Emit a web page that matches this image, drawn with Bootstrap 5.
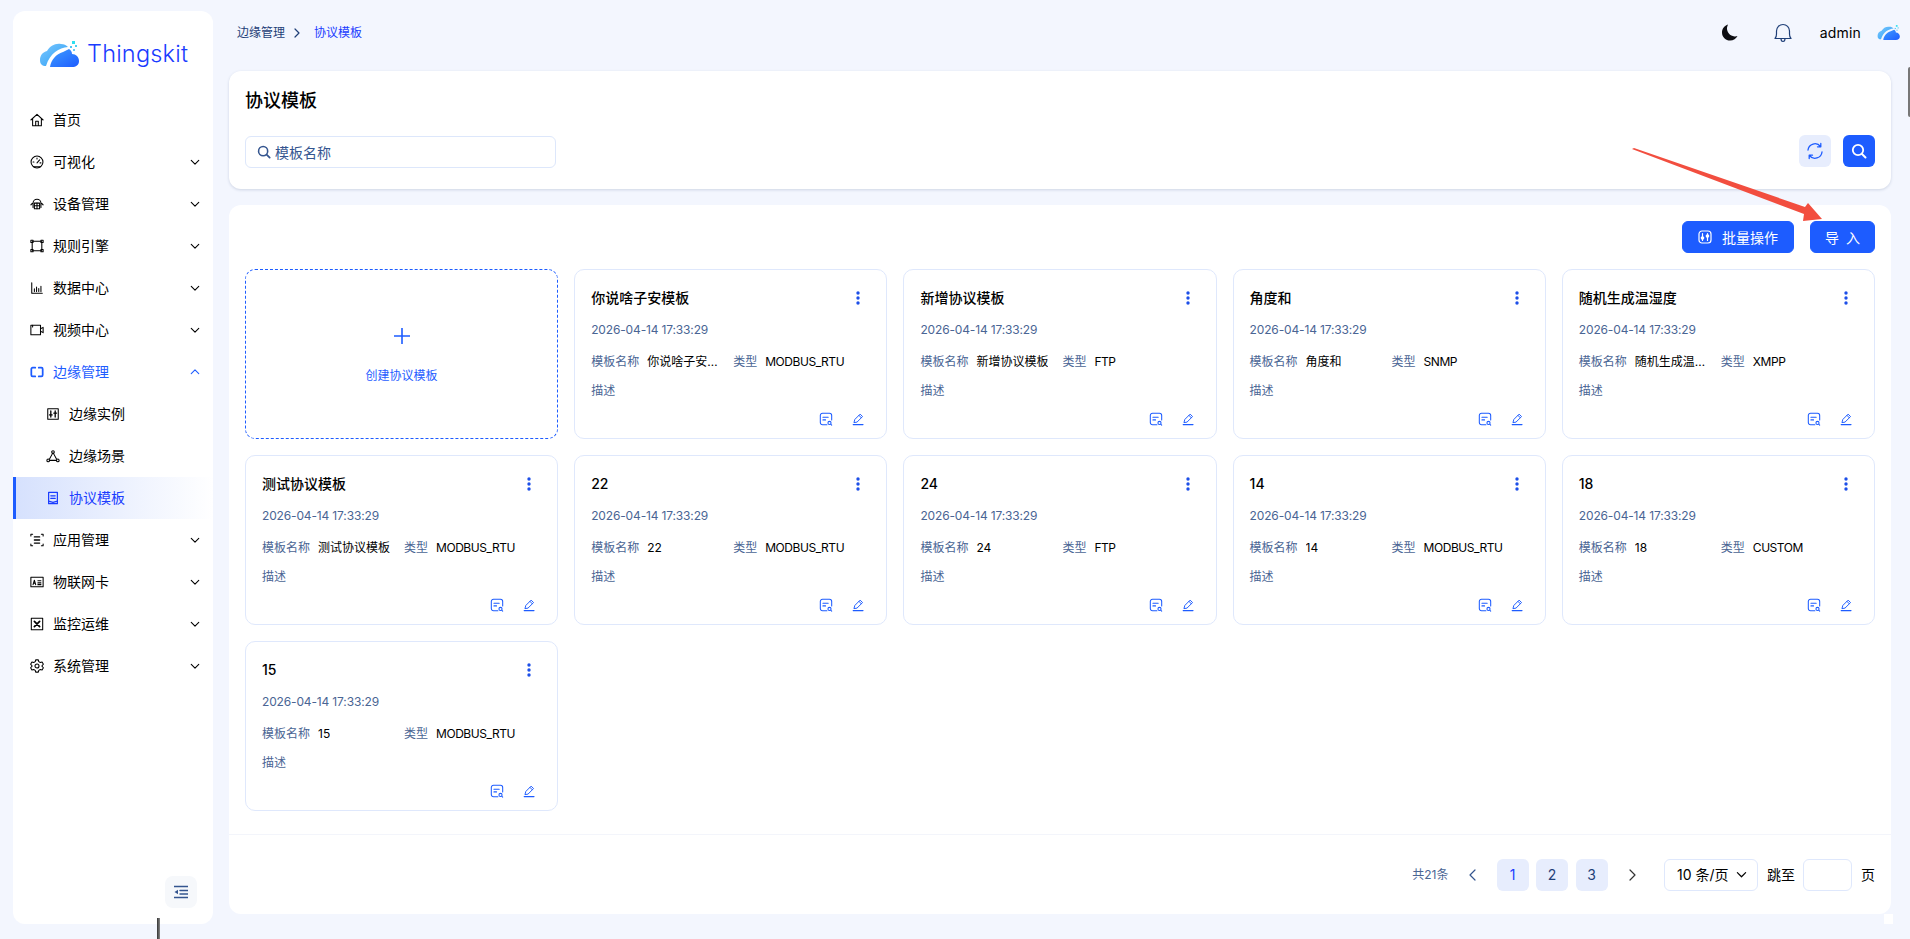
<!DOCTYPE html>
<html lang="zh-CN">
<head>
    <meta charset="UTF-8">
    <meta name="viewport" content="width=device-width, initial-scale=1.0">
    <title>协议模板</title>
    <link href="https://cdn.jsdelivr.net/npm/bootstrap@5.3.0/dist/css/bootstrap.min.css" rel="stylesheet">
    <style>
        body { width: 1910px; height: 939px; overflow: hidden; background: #f3f6fe; color: #000; font-family: Inter, "Noto Sans CJK SC", sans-serif; font-size: 14px; }
        svg.ico { fill: none; stroke: currentColor; stroke-width: 1.2; stroke-linecap: round; stroke-linejoin: round; flex: none; }

        /* sidebar */
        .side-wrap { width: 200px; height: 913px; margin: 11px 0 0 13px; background: #fff; border-radius: 12px; position: relative; }
        .logo-row { height: 88px; padding: 29px 0 0 26px; gap: 6px; }
        .logo-name { color: #1a3cff; font-size: 23.5px; font-weight: 300; line-height: 28px; letter-spacing: .2px; }
        .side-item { height: 42px; padding: 0 13px 0 17px; color: #000; gap: 9px; line-height: 42px; text-decoration: none; }
        .side-item .chev { margin-left: auto; }
        .side-item.open { color: #1d5cff; }
        .side-item.sub { padding-left: 33px; }
        .side-item.active { color: #1a3cff; border-left: 3px solid #1d5cff; padding-left: 30px; background: linear-gradient(90deg, #d6e1fd, #fff); }
        .collapse-btn { position: absolute; right: 16px; bottom: 16px; width: 32px; height: 32px; background: #f6f8fb; border-radius: 8px; color: #34558f; }

        /* header */
        .main-wrap { width: 1662px; margin-left: 16px; }
        .top-row { height: 71px; padding: 0 0 6px 8px; margin-right: -10px; }
        .crumbs { font-size: 12px; color: #1f3f78; --bs-breadcrumb-margin-bottom: 0; --bs-breadcrumb-item-active-color: #1a3cff; }
        .crumb-last { margin-left: 5px; }
        .moon-ico { margin-right: 36px; }
        .admin-name { margin: 0 16px 0 28px; font-size: 14px; letter-spacing: .2px; }

        /* panels */
        .panel { border: 0; border-radius: 12px; background: #fff; }
        .search-panel { height: 118px; padding: 16px; margin-bottom: 16px; box-shadow: 0 1px 3px rgba(40, 60, 110, .18); }
        .page-title { font-size: 18px; font-weight: 500; line-height: 28px; margin: 0 0 21px; }
        .search-box { width: 311px; height: 32px; border: 1px solid #dde7fb; border-radius: 6px; padding: 0 11px; gap: 4px; color: #34558f; font-size: 14px; }
        .search-acts { gap: 12px; margin-top: -2px; }
        .square-btn { width: 32px; height: 32px; padding: 0; border-radius: 6px; border: 0; }
        .btn-soft { background: #e7edfd; color: #1d5cff; }
        .btn-main { --bs-btn-bg: #1d5cff; --bs-btn-border-color: #1d5cff; --bs-btn-hover-bg: #1d5cff; --bs-btn-padding-y: 0; height: 32px; font-size: 14px; border-radius: 6px; }
        .list-panel { height: 709px; }
        .tool-row { padding: 16px; gap: 16px; }
        .batch-btn { width: 112px; padding: 0; gap: 10px; }
        .import-btn { width: 65px; padding: 0; word-spacing: 3px; }

        /* template cards */
        .tpl-grid { display: grid; grid-template-columns: repeat(5, 1fr); grid-auto-rows: 170px; gap: 16px; padding: 0 16px; }
        .tpl-card { border: 1px solid #dfe8fc; border-radius: 10px; padding: 16px 16px 0; position: relative; --bs-card-bg: #fff; }
        .tpl-add { border: 1px dashed #1d5cff; border-radius: 10px; color: #1d5cff; font-size: 12px; gap: 23px; padding-top: 4px; }
        .tpl-title { font-size: 14px; font-weight: 500; line-height: 24px; height: 24px; }
        .tpl-dots { color: #1d4fe8; position: absolute; right: 26px; top: 21px; }
        .tpl-date { color: #4a6594; font-size: 12px; line-height: 18px; margin-top: 11px; letter-spacing: -.15px; }
        .tpl-meta { font-size: 12px; line-height: 18px; margin-top: 14px; }
        .tpl-cell { width: 142px; gap: 8px; }
        .tpl-cell.narrow { width: auto; }
        .tpl-label { color: #4a6594; flex: none; }
        .tpl-value { max-width: 74px; }
        .tpl-cell.narrow .tpl-value { max-width: none; letter-spacing: -.45px; }
        .tpl-desc { color: #4a6594; font-size: 12px; line-height: 18px; margin-top: 11px; }
        .tpl-acts { position: absolute; right: 21px; bottom: 12px; gap: 19px; color: #1d5cff; }

        /* footer */
        .pager-row { height: 80px; margin-top: auto; border-top: 1px solid #f3f5fb; padding-right: 16px; font-size: 14px; }
        .pager-total { color: #4a6594; font-size: 12px; margin-right: 17px; }
        .pager-arrow { color: #34558f; width: 14px; margin-right: 17px; }
        .pager-next { color: #333; margin: 0 0 0 10px; }
        .pager-num { width: 32px; height: 32px; border-radius: 6px; background: #e7edfd; color: #1f3f78; margin-right: 7.5px; }
        .pager-num.on { color: #1a3cff; }
        .pager-select { width: 94px; height: 32px; border: 1px solid #dfe8fc; border-radius: 6px; padding: 0 10px 0 12px; margin: 0 9px 0 25px; }
        .pager-input { width: 49px; height: 32px; border: 1px solid #dfe8fc; border-radius: 6px; margin: 0 9px 0 8px; }

        /* bits lying on top of the page */
        .note-arrow { position: absolute; left: 0; top: 0; pointer-events: none; }
        .scroll-thumb { position: absolute; right: 0; top: 67px; width: 2px; height: 50px; background: #777; border-radius: 2px 0 0 2px; }
        .cursor-bar { position: absolute; left: 157px; top: 918px; width: 3px; height: 21px; background: linear-gradient(90deg, #333, #888); }
        .corner-bit { position: absolute; left: 1884px; top: 914px; width: 9px; height: 10px; background: #fff; }
    </style>
</head>
<body>
<svg width="0" height="0" class="position-absolute">
    <defs>
        <linearGradient id="cloudA" x1="0" y1="0" x2="1" y2="1"><stop offset="0" stop-color="#7cc8ff"/><stop offset="1" stop-color="#2a9df4"/></linearGradient>
        <linearGradient id="cloudB" x1="0" y1="0" x2="1" y2="1"><stop offset="0" stop-color="#3f9dff"/><stop offset="1" stop-color="#1d5cff"/></linearGradient>
    </defs>
    <symbol id="cloud" viewBox="0 0 42 28">
        <path fill="url(#cloudA)" d="M1 20c0-5 3-8 7-9 3-5 8-8 14-7 3 0 5 1 7 3C20 8 11 13 7 26 3 26 1 24 1 20z"/>
        <path fill="url(#cloudB)" d="M11 27c1-7 6-13 13-15l6-3c2 1 3 3 3 5 4 0 7 3 7 7s-3 6-7 6z"/>
        <rect x="33" y="1" width="3" height="3" fill="#2fe0f0"/><rect x="31" y="6" width="2" height="2" fill="#4cc4f5"/><rect x="36" y="5" width="2" height="2" fill="#4cd0f0"/><rect x="34" y="9" width="2" height="2" fill="#6cc8f5"/>
    </symbol>
    <symbol id="i-home" viewBox="0 0 16 16"><path d="M1 8l7-6.500L15 8M3 7v7.500h10V7M6.500 14.500v-5h3v5"/></symbol>
    <symbol id="i-gauge" viewBox="0 0 16 16"><circle cx="8" cy="8" r="6.800"/><path d="M8 9l3-3.500M3.500 8h1M11.500 9h1M8 3.500v1M4 13.500h8"/></symbol>
    <symbol id="i-device" viewBox="0 0 16 16"><path d="M3.500 7a4.500 4.500 0 0 1 9 0M1 9c.8-1.200 1.600-1.800 2.500-2v5M15 9c-.8-1.200-1.600-1.800-2.500-2v5"/><rect x="5" y="7" width="6" height="6.500"/><path d="M5 10h6M8 7v6.500"/></symbol>
    <symbol id="i-rule" viewBox="0 0 16 16"><path d="M3 2.500h10M3 13.500h10M2.500 3.500v9M13.500 3.500v9"/><rect x="1" y="1.500" width="2.500" height="2.500"/><rect x="12.500" y="1.500" width="2.500" height="2.500"/><rect x="1" y="12" width="2.500" height="2.500"/><rect x="12.500" y="12" width="2.500" height="2.500"/></symbol>
    <symbol id="i-chart" viewBox="0 0 16 16"><path d="M2 2v12h12M5 12V9M7.500 12V7M10 12V8.500M12.500 12V6"/></symbol>
    <symbol id="i-video" viewBox="0 0 16 16"><rect x="1" y="2.500" width="11" height="11"/><path d="M12 6.500l3-1.500v6l-3-1.500M3 2.500v2"/></symbol>
    <symbol id="i-edge" viewBox="0 0 16 16"><path stroke-width="2" d="M6 3H3a1.500 1.500 0 0 0-1.500 1.500v7A1.500 1.500 0 0 0 3 13h3M10 3h3a1.500 1.500 0 0 1 1.500 1.500v7A1.500 1.500 0 0 1 13 13h-3"/></symbol>
    <symbol id="i-inst" viewBox="0 0 16 16"><rect x="2" y="2" width="12" height="12"/><path stroke-width="1.500" d="M5.500 4.500v7M10.500 4.500v7M4 9h3M9 7h3"/></symbol>
    <symbol id="i-scene" viewBox="0 0 16 16"><circle cx="8" cy="3.500" r="1.500"/><circle cx="2.500" cy="13" r="1.500"/><circle cx="13.500" cy="13" r="1.500"/><path d="M7.500 5l-3.500 6.500M8.500 5l3.500 6.500M4 13h8"/></symbol>
    <symbol id="i-tpl" viewBox="0 0 16 16"><path stroke-width="1.400" d="M3 1.500h10v13H3zM5.500 5.500h5M5.500 8.500h5M3 11.500l5 1.500 5-1.500"/></symbol>
    <symbol id="i-app" viewBox="0 0 16 16"><path d="M1 3.500V1.500h2M13 1.500h2v2M15 12.500v2h-2M3 14.500H1v-2"/><path stroke-width="1.500" d="M5 4.500h6M5 8h6M5 11.500h6"/></symbol>
    <symbol id="i-sim" viewBox="0 0 16 16"><rect x="1" y="2.500" width="14" height="11"/><path d="M3.500 11l1.500-5 1.500 5M4 9.500h2M9 6.500h3.500M9 9h3.500M9 11h3.500"/></symbol>
    <symbol id="i-mon" viewBox="0 0 16 16"><rect x="1.500" y="1.500" width="13" height="13"/><path stroke-width="2" d="M5 5l6 6M11 5l-6 6"/></symbol>
    <symbol id="i-gear" viewBox="0 0 16 16"><path d="M6.500 1h3l.5 2 1.800 1 2-.6 1.500 2.600-1.500 1.500v1l1.500 1.500-1.500 2.600-2-.6-1.800 1-.5 2h-3l-.5-2-1.800-1-2 .6L.7 10l1.500-1.500v-1L.7 6l1.500-2.600 2 .6L6 3z"/><circle cx="8" cy="8" r="2.300"/></symbol>
    <symbol id="i-down" viewBox="0 0 12 12"><path stroke-width="1.300" d="M1.500 4l4.500 4.500L10.500 4"/></symbol>
    <symbol id="i-up" viewBox="0 0 12 12"><path stroke-width="1.300" d="M1.500 8L6 3.500 10.500 8"/></symbol>
    <symbol id="i-search" viewBox="0 0 16 16"><circle cx="7" cy="7" r="5.200" stroke-width="1.800"/><path stroke-width="2" d="M11 11l3.500 3.500"/></symbol>
    <symbol id="i-view" viewBox="0 0 16 16"><path d="M9 14.500H4A2.500 2.500 0 0 1 1.500 12V4A2.500 2.500 0 0 1 4 1.500h8A2.500 2.500 0 0 1 14.500 4v5M4.500 6h6M4.500 9h3"/><circle cx="12" cy="12.500" r="1.800"/><path d="M13.500 14l1 1"/></symbol>
    <symbol id="i-edit" viewBox="0 0 16 16"><path d="M2.500 12l1-3.500L10 2l3 3-6.500 6.500zM8.500 3.500l3 3"/><path stroke-width="1.500" d="M1.500 14.800h12"/></symbol>
</svg>

<div class="d-flex">
    <aside class="side-wrap">
        <div class="logo-row d-flex align-items-start">
            <svg width="42" height="28"><use href="#cloud"/></svg>
            <span class="logo-name">Thingskit</span>
        </div>
        <nav class="nav flex-column">
            <a class="side-item d-flex align-items-center" href="#"><svg class="ico" width="14" height="14"><use href="#i-home"/></svg>首页</a>
            <a class="side-item d-flex align-items-center" href="#"><svg class="ico" width="14" height="14"><use href="#i-gauge"/></svg>可视化<svg class="ico chev" width="10" height="10"><use href="#i-down"/></svg></a>
            <a class="side-item d-flex align-items-center" href="#"><svg class="ico" width="14" height="14"><use href="#i-device"/></svg>设备管理<svg class="ico chev" width="10" height="10"><use href="#i-down"/></svg></a>
            <a class="side-item d-flex align-items-center" href="#"><svg class="ico" width="14" height="14"><use href="#i-rule"/></svg>规则引擎<svg class="ico chev" width="10" height="10"><use href="#i-down"/></svg></a>
            <a class="side-item d-flex align-items-center" href="#"><svg class="ico" width="14" height="14"><use href="#i-chart"/></svg>数据中心<svg class="ico chev" width="10" height="10"><use href="#i-down"/></svg></a>
            <a class="side-item d-flex align-items-center" href="#"><svg class="ico" width="14" height="14"><use href="#i-video"/></svg>视频中心<svg class="ico chev" width="10" height="10"><use href="#i-down"/></svg></a>
            <a class="side-item open d-flex align-items-center" href="#"><svg class="ico" width="14" height="14"><use href="#i-edge"/></svg>边缘管理<svg class="ico chev" width="10" height="10"><use href="#i-up"/></svg></a>
            <a class="side-item sub d-flex align-items-center" href="#"><svg class="ico" width="14" height="14"><use href="#i-inst"/></svg>边缘实例</a>
            <a class="side-item sub d-flex align-items-center" href="#"><svg class="ico" width="14" height="14"><use href="#i-scene"/></svg>边缘场景</a>
            <a class="side-item sub active d-flex align-items-center" href="#"><svg class="ico" width="14" height="14"><use href="#i-tpl"/></svg>协议模板</a>
            <a class="side-item d-flex align-items-center" href="#"><svg class="ico" width="14" height="14"><use href="#i-app"/></svg>应用管理<svg class="ico chev" width="10" height="10"><use href="#i-down"/></svg></a>
            <a class="side-item d-flex align-items-center" href="#"><svg class="ico" width="14" height="14"><use href="#i-sim"/></svg>物联网卡<svg class="ico chev" width="10" height="10"><use href="#i-down"/></svg></a>
            <a class="side-item d-flex align-items-center" href="#"><svg class="ico" width="14" height="14"><use href="#i-mon"/></svg>监控运维<svg class="ico chev" width="10" height="10"><use href="#i-down"/></svg></a>
            <a class="side-item d-flex align-items-center" href="#"><svg class="ico" width="14" height="14"><use href="#i-gear"/></svg>系统管理<svg class="ico chev" width="10" height="10"><use href="#i-down"/></svg></a>
        </nav>
        <div class="collapse-btn d-flex align-items-center justify-content-center">
            <svg class="ico" width="14" height="14" viewBox="0 0 14 14"><path stroke-width="1.400" d="M0 1.500h14M6 5.500h8M6 9h8M0 12.500h14"/><path fill="currentColor" stroke="none" d="M4 4.700v4.600L0.500 7z"/></svg>
        </div>
    </aside>

    <main class="main-wrap">
        <div class="top-row d-flex align-items-center justify-content-between">
            <nav aria-label="breadcrumb">
                <ol class="breadcrumb crumbs">
                    <li class="breadcrumb-item">边缘管理</li>
                    <li class="d-flex align-items-center ms-2 me-2"><svg class="ico" width="8" height="10" viewBox="0 0 8 10"><path stroke-width="1.200" d="M2 1l4 4-4 4"/></svg></li>
                    <li class="breadcrumb-item active crumb-last">协议模板</li>
                </ol>
            </nav>
            <div class="d-flex align-items-center">
                <svg class="moon-ico" width="16" height="17" viewBox="0 0 16 17"><path fill="#0d0d12" d="M6 .5C2.500 1.500 0 4.700 0 8.400 0 13 3.700 16.500 8.200 16.500c3.200 0 6-1.800 7.300-4.500-1 .4-2 .5-3 .4C8 12.200 4.600 8 5 3.800 5.100 2.800 5.500 1.500 6 .5z"/></svg>
                <svg class="ico bell-ico" width="18" height="20" viewBox="0 0 18 20"><path stroke="#1f3f78" d="M1 15.500c1-1 1.500-2.500 1.500-4.500V8a6.500 6.500 0 0 1 13 0v3c0 2 .5 3.500 1.500 4.500zM7 15.500c0 2 .8 3 2 3s2-1 2-3"/></svg>
                <span class="admin-name">admin</span>
                <svg width="24" height="17" viewBox="0 0 42 28"><use href="#cloud"/></svg>
            </div>
        </div>

        <section class="card panel search-panel">
            <h1 class="page-title">协议模板</h1>
            <div class="d-flex align-items-center justify-content-between">
                <div class="search-box d-flex align-items-center">
                    <svg class="ico" width="14" height="14"><use href="#i-search"/></svg>
                    <span>模板名称</span>
                </div>
                <div class="search-acts d-flex">
                    <button class="btn square-btn btn-soft d-flex align-items-center justify-content-center" type="button">
                        <svg class="ico" width="18" height="18" viewBox="0 0 18 18"><path stroke-width="1.300" d="M2 8a7 7 0 0 1 12.500-3.500M16 10a7 7 0 0 1-12.500 3.500M14.800 1.500v3.300h-3.300M3.200 16.500v-3.300h3.300"/></svg>
                    </button>
                    <button class="btn btn-main btn-primary square-btn d-flex align-items-center justify-content-center" type="button">
                        <svg class="ico" width="16" height="16"><use href="#i-search"/></svg>
                    </button>
                </div>
            </div>
        </section>

        <section class="card panel list-panel d-flex flex-column">
            <div class="tool-row d-flex justify-content-end">
                <button class="btn btn-main btn-primary batch-btn d-flex align-items-center justify-content-center" type="button">
                    <svg class="ico" width="14" height="14" viewBox="0 0 14 14"><rect x="1" y="1" width="12" height="12" rx="3"/><path d="M4.500 3.500v7M9.500 3.500v7"/><circle cx="4.500" cy="8" r="1.200"/><circle cx="9.500" cy="6" r="1.200"/></svg>
                    <span>批量操作</span>
                </button>
                <button class="btn btn-main btn-primary import-btn" type="button">导 入</button>
            </div>

            <div class="tpl-grid">
                <div class="tpl-add d-flex flex-column align-items-center justify-content-center">
                    <svg class="ico" width="16" height="16" viewBox="0 0 16 16"><path stroke-width="1.600" d="M8 0v16M0 8h16" stroke-linecap="butt"/></svg>
                    <span>创建协议模板</span>
                </div>

                <div class="card tpl-card">
                    <div class="tpl-title">你说啥子安模板</div>
                    <svg class="tpl-dots" width="4" height="14" viewBox="0 0 4 14" fill="currentColor"><circle cx="2" cy="2" r="1.700"/><circle cx="2" cy="7" r="1.700"/><circle cx="2" cy="12" r="1.700"/></svg>
                    <div class="tpl-date">2026-04-14 17:33:29</div>
                    <div class="tpl-meta d-flex"><div class="tpl-cell d-flex"><span class="tpl-label">模板名称</span><span class="tpl-value text-truncate">你说啥子安模板</span></div><div class="tpl-cell narrow d-flex"><span class="tpl-label">类型</span><span class="tpl-value">MODBUS_RTU</span></div></div>
                    <div class="tpl-desc">描述</div>
                    <div class="tpl-acts d-flex"><svg class="ico" width="14" height="14"><use href="#i-view"/></svg><svg class="ico" width="13" height="14"><use href="#i-edit"/></svg></div>
                </div>
                <div class="card tpl-card">
                    <div class="tpl-title">新增协议模板</div>
                    <svg class="tpl-dots" width="4" height="14" viewBox="0 0 4 14" fill="currentColor"><circle cx="2" cy="2" r="1.700"/><circle cx="2" cy="7" r="1.700"/><circle cx="2" cy="12" r="1.700"/></svg>
                    <div class="tpl-date">2026-04-14 17:33:29</div>
                    <div class="tpl-meta d-flex"><div class="tpl-cell d-flex"><span class="tpl-label">模板名称</span><span class="tpl-value text-truncate">新增协议模板</span></div><div class="tpl-cell narrow d-flex"><span class="tpl-label">类型</span><span class="tpl-value">FTP</span></div></div>
                    <div class="tpl-desc">描述</div>
                    <div class="tpl-acts d-flex"><svg class="ico" width="14" height="14"><use href="#i-view"/></svg><svg class="ico" width="13" height="14"><use href="#i-edit"/></svg></div>
                </div>
                <div class="card tpl-card">
                    <div class="tpl-title">角度和</div>
                    <svg class="tpl-dots" width="4" height="14" viewBox="0 0 4 14" fill="currentColor"><circle cx="2" cy="2" r="1.700"/><circle cx="2" cy="7" r="1.700"/><circle cx="2" cy="12" r="1.700"/></svg>
                    <div class="tpl-date">2026-04-14 17:33:29</div>
                    <div class="tpl-meta d-flex"><div class="tpl-cell d-flex"><span class="tpl-label">模板名称</span><span class="tpl-value text-truncate">角度和</span></div><div class="tpl-cell narrow d-flex"><span class="tpl-label">类型</span><span class="tpl-value">SNMP</span></div></div>
                    <div class="tpl-desc">描述</div>
                    <div class="tpl-acts d-flex"><svg class="ico" width="14" height="14"><use href="#i-view"/></svg><svg class="ico" width="13" height="14"><use href="#i-edit"/></svg></div>
                </div>
                <div class="card tpl-card">
                    <div class="tpl-title">随机生成温湿度</div>
                    <svg class="tpl-dots" width="4" height="14" viewBox="0 0 4 14" fill="currentColor"><circle cx="2" cy="2" r="1.700"/><circle cx="2" cy="7" r="1.700"/><circle cx="2" cy="12" r="1.700"/></svg>
                    <div class="tpl-date">2026-04-14 17:33:29</div>
                    <div class="tpl-meta d-flex"><div class="tpl-cell d-flex"><span class="tpl-label">模板名称</span><span class="tpl-value text-truncate">随机生成温湿度</span></div><div class="tpl-cell narrow d-flex"><span class="tpl-label">类型</span><span class="tpl-value">XMPP</span></div></div>
                    <div class="tpl-desc">描述</div>
                    <div class="tpl-acts d-flex"><svg class="ico" width="14" height="14"><use href="#i-view"/></svg><svg class="ico" width="13" height="14"><use href="#i-edit"/></svg></div>
                </div>
                <div class="card tpl-card">
                    <div class="tpl-title">测试协议模板</div>
                    <svg class="tpl-dots" width="4" height="14" viewBox="0 0 4 14" fill="currentColor"><circle cx="2" cy="2" r="1.700"/><circle cx="2" cy="7" r="1.700"/><circle cx="2" cy="12" r="1.700"/></svg>
                    <div class="tpl-date">2026-04-14 17:33:29</div>
                    <div class="tpl-meta d-flex"><div class="tpl-cell d-flex"><span class="tpl-label">模板名称</span><span class="tpl-value text-nowrap">测试协议模板</span></div><div class="tpl-cell narrow d-flex"><span class="tpl-label">类型</span><span class="tpl-value">MODBUS_RTU</span></div></div>
                    <div class="tpl-desc">描述</div>
                    <div class="tpl-acts d-flex"><svg class="ico" width="14" height="14"><use href="#i-view"/></svg><svg class="ico" width="13" height="14"><use href="#i-edit"/></svg></div>
                </div>
                <div class="card tpl-card">
                    <div class="tpl-title">22</div>
                    <svg class="tpl-dots" width="4" height="14" viewBox="0 0 4 14" fill="currentColor"><circle cx="2" cy="2" r="1.700"/><circle cx="2" cy="7" r="1.700"/><circle cx="2" cy="12" r="1.700"/></svg>
                    <div class="tpl-date">2026-04-14 17:33:29</div>
                    <div class="tpl-meta d-flex"><div class="tpl-cell d-flex"><span class="tpl-label">模板名称</span><span class="tpl-value text-truncate">22</span></div><div class="tpl-cell narrow d-flex"><span class="tpl-label">类型</span><span class="tpl-value">MODBUS_RTU</span></div></div>
                    <div class="tpl-desc">描述</div>
                    <div class="tpl-acts d-flex"><svg class="ico" width="14" height="14"><use href="#i-view"/></svg><svg class="ico" width="13" height="14"><use href="#i-edit"/></svg></div>
                </div>
                <div class="card tpl-card">
                    <div class="tpl-title">24</div>
                    <svg class="tpl-dots" width="4" height="14" viewBox="0 0 4 14" fill="currentColor"><circle cx="2" cy="2" r="1.700"/><circle cx="2" cy="7" r="1.700"/><circle cx="2" cy="12" r="1.700"/></svg>
                    <div class="tpl-date">2026-04-14 17:33:29</div>
                    <div class="tpl-meta d-flex"><div class="tpl-cell d-flex"><span class="tpl-label">模板名称</span><span class="tpl-value text-truncate">24</span></div><div class="tpl-cell narrow d-flex"><span class="tpl-label">类型</span><span class="tpl-value">FTP</span></div></div>
                    <div class="tpl-desc">描述</div>
                    <div class="tpl-acts d-flex"><svg class="ico" width="14" height="14"><use href="#i-view"/></svg><svg class="ico" width="13" height="14"><use href="#i-edit"/></svg></div>
                </div>
                <div class="card tpl-card">
                    <div class="tpl-title">14</div>
                    <svg class="tpl-dots" width="4" height="14" viewBox="0 0 4 14" fill="currentColor"><circle cx="2" cy="2" r="1.700"/><circle cx="2" cy="7" r="1.700"/><circle cx="2" cy="12" r="1.700"/></svg>
                    <div class="tpl-date">2026-04-14 17:33:29</div>
                    <div class="tpl-meta d-flex"><div class="tpl-cell d-flex"><span class="tpl-label">模板名称</span><span class="tpl-value text-truncate">14</span></div><div class="tpl-cell narrow d-flex"><span class="tpl-label">类型</span><span class="tpl-value">MODBUS_RTU</span></div></div>
                    <div class="tpl-desc">描述</div>
                    <div class="tpl-acts d-flex"><svg class="ico" width="14" height="14"><use href="#i-view"/></svg><svg class="ico" width="13" height="14"><use href="#i-edit"/></svg></div>
                </div>
                <div class="card tpl-card">
                    <div class="tpl-title">18</div>
                    <svg class="tpl-dots" width="4" height="14" viewBox="0 0 4 14" fill="currentColor"><circle cx="2" cy="2" r="1.700"/><circle cx="2" cy="7" r="1.700"/><circle cx="2" cy="12" r="1.700"/></svg>
                    <div class="tpl-date">2026-04-14 17:33:29</div>
                    <div class="tpl-meta d-flex"><div class="tpl-cell d-flex"><span class="tpl-label">模板名称</span><span class="tpl-value text-truncate">18</span></div><div class="tpl-cell narrow d-flex"><span class="tpl-label">类型</span><span class="tpl-value">CUSTOM</span></div></div>
                    <div class="tpl-desc">描述</div>
                    <div class="tpl-acts d-flex"><svg class="ico" width="14" height="14"><use href="#i-view"/></svg><svg class="ico" width="13" height="14"><use href="#i-edit"/></svg></div>
                </div>
                <div class="card tpl-card">
                    <div class="tpl-title">15</div>
                    <svg class="tpl-dots" width="4" height="14" viewBox="0 0 4 14" fill="currentColor"><circle cx="2" cy="2" r="1.700"/><circle cx="2" cy="7" r="1.700"/><circle cx="2" cy="12" r="1.700"/></svg>
                    <div class="tpl-date">2026-04-14 17:33:29</div>
                    <div class="tpl-meta d-flex"><div class="tpl-cell d-flex"><span class="tpl-label">模板名称</span><span class="tpl-value text-truncate">15</span></div><div class="tpl-cell narrow d-flex"><span class="tpl-label">类型</span><span class="tpl-value">MODBUS_RTU</span></div></div>
                    <div class="tpl-desc">描述</div>
                    <div class="tpl-acts d-flex"><svg class="ico" width="14" height="14"><use href="#i-view"/></svg><svg class="ico" width="13" height="14"><use href="#i-edit"/></svg></div>
                </div>
            </div>

            <div class="pager-row d-flex align-items-center justify-content-end">
                <span class="pager-total">共21条</span>
                <svg class="ico pager-arrow" width="14" height="12" viewBox="0 0 14 12"><path stroke-width="1.200" d="M9 1L4 6l5 5"/></svg>
                <span class="pager-num on d-flex align-items-center justify-content-center">1</span>
                <span class="pager-num d-flex align-items-center justify-content-center">2</span>
                <span class="pager-num d-flex align-items-center justify-content-center">3</span>
                <svg class="ico pager-next" width="14" height="12" viewBox="0 0 14 12"><path stroke-width="1.200" d="M5 1l5 5-5 5"/></svg>
                <div class="pager-select d-flex align-items-center justify-content-between"><span>10 条/页</span><svg class="ico" width="11" height="11"><use href="#i-down"/></svg></div>
                <span>跳至</span>
                <div class="pager-input"></div>
                <span>页</span>
            </div>
        </section>
    </main>
</div>

<svg class="note-arrow" width="1910" height="939" viewBox="0 0 1910 939"><polygon fill="#f24e3f" points="1632,149 1634,148 1805,207 1808,203 1822,219 1803,221 1804,214"/></svg>
<div class="scroll-thumb"></div>
<div class="cursor-bar"></div>
<div class="corner-bit"></div>
<script src="https://cdn.jsdelivr.net/npm/bootstrap@5.3.0/dist/js/bootstrap.bundle.min.js"></script>
</body>
</html>
